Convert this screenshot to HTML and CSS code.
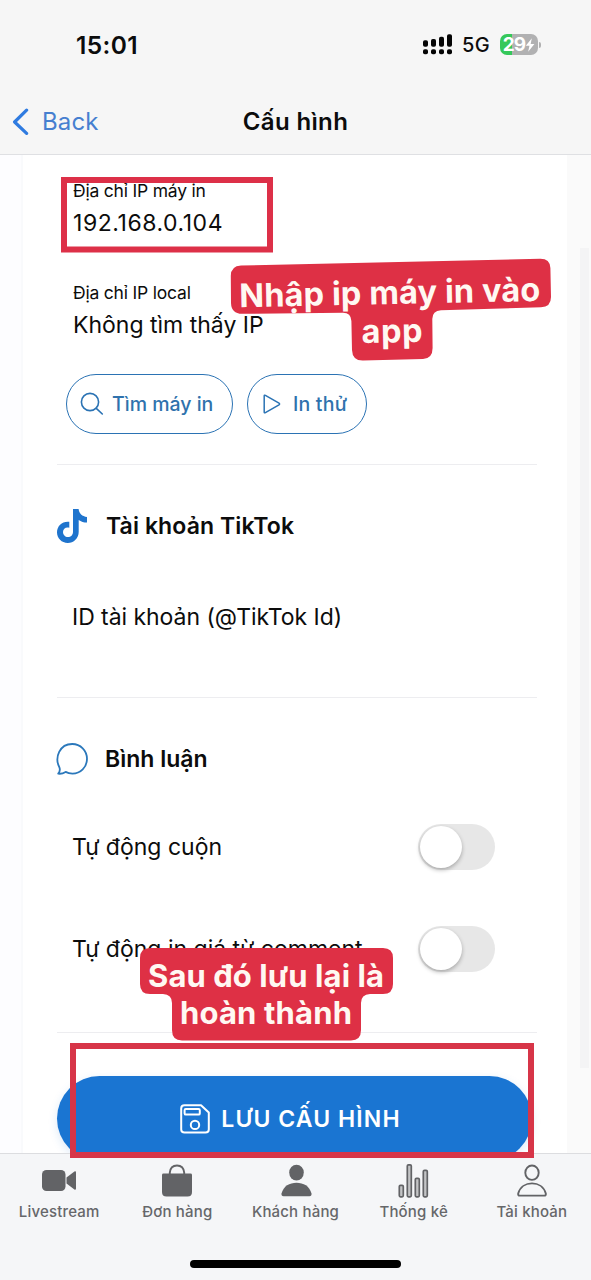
FILE: index.html
```html
<!DOCTYPE html>
<html lang="vi">
<head>
<meta charset="utf-8">
<title>Cấu hình</title>
<link rel="stylesheet" href="styles.css">
</head>
<body>
<div class="app">
  <header class="header">
    <div class="status">
      <span class="time">15:01</span>
      <div class="status-right">
        <svg class="signal" width="30" height="21" viewBox="0 0 30 21"><g fill="#050505"><rect x="0" y="6.3" width="5" height="6.5" rx="1.8"/><rect x="8" y="4.9" width="5" height="7.9" rx="1.8"/><rect x="16" y="2.8" width="5" height="10" rx="1.8"/><rect x="24" y="0.3" width="5" height="12.5" rx="1.8"/><rect x="0" y="15.3" width="5" height="5" rx="1.8"/><rect x="8" y="15.3" width="5" height="5" rx="1.8"/><rect x="16" y="15.3" width="5" height="5" rx="1.8"/><rect x="24" y="15.3" width="5" height="5" rx="1.8"/></g></svg>
        <span class="net">5G</span>
        <div class="battery"><span class="pct">29</span><svg width="10" height="14" viewBox="0 0 9 13"><path d="M6.2 0.3 L0.6 7.2 H4 L2.8 12.7 L8.6 5.5 H5.1 Z" fill="#fff"/></svg></div>
        <span class="battery-tip"></span>
      </div>
    </div>
    <nav class="nav">
      <div class="back">
        <svg width="17" height="28" viewBox="0 0 17 28"><path d="M14.6 2.2 L2.6 14 L14.6 25.4" fill="none" stroke="#2f7be0" stroke-width="3.2" stroke-linecap="round" stroke-linejoin="round"/></svg>
        <span class="back-text">Back</span>
      </div>
      <h1 class="title">Cấu hình</h1>
      <div></div>
    </nav>
  </header>

  <main class="content">
    <div class="card">
      <div class="field"><span class="label">Địa chỉ IP máy in</span><span class="value ip">192.168.0.104</span></div>
      <div class="field"><span class="label">Địa chỉ IP local</span><span class="value">Không tìm thấy IP</span></div>
      <div class="actions">
        <button class="pill find">
          <svg width="24" height="24" viewBox="0 0 24 24"><g fill="none" stroke="#2b73b4" stroke-width="1.6" stroke-linecap="round"><circle cx="10" cy="10" r="8.6"/><path d="M16.3 16.3 L22.3 22"/></g></svg>
          <span>Tìm máy in</span>
        </button>
        <button class="pill test">
          <svg width="18" height="20" viewBox="0 0 18 20"><path d="M1.2 2 V18 Q1.2 19.3 2.4 18.6 L16 10.8 Q17.2 10 16 9.2 L2.4 1.4 Q1.2 0.7 1.2 2 Z" fill="none" stroke="#2b73b4" stroke-width="1.5"/></svg>
          <span>In thử</span>
        </button>
      </div>

      <section class="section">
        <h2 class="section-title">
          <svg width="31" height="34" viewBox="0 0 31 34"><path d="M16 0 H21.6 C22 4.4 25.2 7.5 30 7.9 V13.5 C26.8 13.5 24 12.5 21.7 10.9 V22.8 C21.7 29.5 16.7 34 10.8 34 C4.6 34 0 29.3 0 23.3 C0 16.8 5.6 11.9 12.3 12.8 V18.8 C8.8 17.8 6 20 6 23.1 C6 26 8.2 28.1 10.9 28.1 C13.9 28.1 16 25.9 16 22.7 Z" fill="#1f74cd"/></svg>
          <span class="tiktok-title">Tài khoản TikTok</span>
        </h2>
        <div class="row first-row"><span class="tiktok-id">ID tài khoản (@TikTok Id)</span></div>
      </section>

      <section class="section comments">
        <h2 class="section-title">
          <svg class="bubble" width="32" height="32" viewBox="0 0 32 32"><path d="M2.2 30.6 C4.2 28.4 4.3 26.6 3.3 24.1 C-1.6 14.5 3.6 1 16.2 1 C24.5 1 31 7.5 31 15.8 C31 24.4 24.4 30.6 16.5 30.6 C13.6 30.6 11.5 30 9.6 28.9 C7.5 30.2 4.6 31 2.2 30.6 Z" fill="none" stroke="#2b78bb" stroke-width="1.8" stroke-linejoin="round"/></svg>
          <span>Bình luận</span>
        </h2>
        <div class="row"><span>Tự động cuộn</span><span class="toggle"><i class="knob"></i></span></div>
        <div class="row"><span>Tự động in giá từ comment</span><span class="toggle"><i class="knob"></i></span></div>
      </section>

      <div class="section save-area">
        <button class="save">
          <svg width="30" height="30" viewBox="0 0 30 30"><g fill="none" stroke="#fff" stroke-width="2" stroke-linejoin="round"><path d="M4.5 1.2 H21 L28.8 8.5 V25.5 Q28.8 28.6 25.5 28.6 H4.5 Q1.2 28.6 1.2 25.5 V4.5 Q1.2 1.2 4.5 1.2 Z"/><rect x="4.6" y="5" width="15.2" height="5.6" rx="1.2"/><circle cx="15" cy="20.9" r="4.2"/></g></svg>
          <span>LƯU CẤU HÌNH</span>
        </button>
      </div>
    </div>
    <div class="scrollbar"></div>
  </main>

  <footer class="footer">
    <div class="tabs">
      <div class="tab"><svg width="36" height="34" viewBox="0 0 36 34"><g fill="#626366"><rect x="1" y="6" width="23.5" height="21" rx="4.5"/><path d="M25.5 13.5 L33.4 7.6 Q35 6.8 35 8.4 V24.6 Q35 26.2 33.4 25.4 L25.5 19.5 Z"/></g></svg><span>Livestream</span></div>
      <div class="tab"><svg width="36" height="34" viewBox="0 0 36 34"><path d="M4.5 9.6 H31.5 Q33 9.6 33 11 V28 Q33 32.6 28.5 32.6 H7.5 Q3 32.6 3 28 V11 Q3 9.6 4.5 9.6 Z" fill="#626366"/><path d="M10.8 11 V8.7 Q11.5 1.5 18 1.5 Q24.5 1.5 25.2 8.7 V11" fill="none" stroke="#626366" stroke-width="1.9"/></svg><span>Đơn hàng</span></div>
      <div class="tab"><svg width="36" height="34" viewBox="0 0 36 34"><g fill="#626366"><ellipse cx="18.5" cy="8.6" rx="7.3" ry="7.9"/><path d="M3.5 29.5 C5.5 22 11.5 18.7 18.5 18.7 C25.5 18.7 31.5 22 33.5 29.5 Q33.8 32.2 31.5 32.2 H5.5 Q3.2 32.2 3.5 29.5 Z"/></g></svg><span>Khách hàng</span></div>
      <div class="tab"><svg width="36" height="34" viewBox="0 0 36 34"><g fill="#c3c4c6" stroke="#626366" stroke-width="1.7"><rect x="3.3" y="21.3" width="4" height="11.5" rx="1.2"/><rect x="11.3" y="0.9" width="4" height="31.9" rx="1.2"/><rect x="19.3" y="14.3" width="4" height="18.5" rx="1.2"/><rect x="27.3" y="6.3" width="4" height="26.5" rx="1.2"/></g></svg><span>Thống kê</span></div>
      <div class="tab"><svg width="36" height="34" viewBox="0 0 36 34"><g fill="none" stroke="#626366" stroke-width="1.9"><ellipse cx="18" cy="8.7" rx="6.7" ry="7.2"/><path d="M4.2 29.5 C6.1 22.8 11.8 19.4 18 19.4 C24.2 19.4 29.9 22.8 31.8 29.5 Q32.2 31.6 30.2 31.6 H5.8 Q3.8 31.6 4.2 29.5 Z"/></g></svg><span>Tài khoản</span></div>
    </div>
    <div class="home"></div>
  </footer>

  <svg class="notes" width="591" height="1280" viewBox="0 0 591 1280">
    <rect x="64" y="180" width="206" height="69.5" fill="none" stroke="#dd3048" stroke-width="6"/>
    <rect x="73" y="1046" width="458" height="109" fill="none" stroke="#d73548" stroke-width="6"/>
    <path d="M241 265.5 L540 258.8 Q550 258.6 550.4 268 L551 297 Q551 307 541 307.3 L441 310.3 Q432.3 311 432.3 319 L432.6 348 Q432.6 358.5 423 359 L363 360.6 Q352.4 360.8 352 350 L351.4 321 Q351 312.8 343 312.8 L242 313.8 Q231.4 313.8 231 303 L230.8 276 Q230.8 266 241 265.5 Z" fill="#de3045"/>
    <path d="M150 948 H383 Q393 948 393 958 V984 Q393 994 383 994 H370 Q361 994.5 361 1003 V1030 Q361 1040.5 351 1040.5 H182 Q172 1040.5 172 1030 V1003 Q172 994.5 163 994 H150 Q140 994 140 984 V958 Q140 948 150 948 Z" fill="#de3045"/>
    <g class="note-text" transform="rotate(-1.2 391 304)">
      <text x="239.5" y="304" textLength="301">Nhập ip máy in vào</text>
      <text x="361" y="342.5" textLength="61">app</text>
    </g>
    <g class="note-text small">
      <text x="148" y="987" textLength="236">Sau đó lưu lại là</text>
      <text x="180" y="1024" textLength="172">hoàn thành</text>
    </g>
  </svg>
</div>
</body>
</html>
```
FILE: styles.css
```css
* { box-sizing: border-box; }
body { margin: 0; background: #fff; font-family: Inter, "Liberation Sans", sans-serif; color: #0c0c0c; }
h1, h2 { margin: 0; font-size: inherit; font-weight: 600; }
button { font-family: inherit; margin: 0; }
svg { display: block; flex: none; }
span { white-space: nowrap; }
.app { position: relative; width: 591px; height: 1280px; display: flex; flex-direction: column; overflow: hidden; }

.header { height: 155px; background: #f6f6f6; border-bottom: 1px solid #dfe0e3; display: flex; flex-direction: column; flex: none; }
.status { height: 89px; display: flex; align-items: center; justify-content: space-between; padding: 0 50px 0 76px; }
.time { font-size: 24.5px; font-weight: 600; letter-spacing: 0.4px; }
.status-right { display: flex; align-items: center; }
.net { font-size: 20px; font-weight: 500; letter-spacing: 0.4px; margin-left: 9px; width: 29px; }
.battery { width: 38px; height: 21px; margin-left: 9px; border-radius: 7px; background: linear-gradient(90deg, #35c85a 0 12px, #b1b1b2 12px); display: flex; align-items: center; justify-content: center; }
.pct { color: #fff; font-size: 19px; font-weight: 700; letter-spacing: -0.8px; }
.battery-tip { width: 2px; height: 6px; margin-left: 1px; border-radius: 0 2px 2px 0; background: #b1b1b2; }
.nav { height: 65px; display: grid; grid-template-columns: 1fr auto 1fr; align-items: center; padding: 0 12px; }
.back { display: flex; align-items: center; gap: 13px; color: #467fd0; }
.back-text { font-size: 24px; letter-spacing: 0.1px; }
.title { font-size: 24px; letter-spacing: 0.35px; }

.content { flex: none; height: 998px; overflow: hidden; display: flex; background: #fafafa; border-left: 21px solid #fdfdff; }
.card { width: 546px; height: 1100px; padding: 23px 30px 0 34px; border-left: 2px solid #f9fafc; background: #fff; flex: none; }
.scrollbar { width: 9px; height: 820px; margin: 93px 0 0 13px; background: #f4f4f5; }
.field { display: flex; flex-direction: column; height: 102px; padding-left: 16px; }
.label { font-size: 17.5px; line-height: 26px; letter-spacing: -0.2px; }
.value { font-size: 23px; line-height: 38px; }
.ip { letter-spacing: 0.55px; }
.actions { display: flex; gap: 14px; margin: -8px 0 30px 9px; }
.pill { height: 60px; border: 1.5px solid #2b73b4; border-radius: 30px; background: #fff; color: #2f72ad; font-size: 19.5px; font-weight: 500; display: flex; align-items: center; padding: 0 0 0 13px; }
.find { width: 167px; gap: 8px; }
.test { width: 120px; gap: 12px; padding-left: 15px; letter-spacing: 0.2px; }
.section { border-top: 1px solid #ededf0; height: 233px; padding-top: 37px; }
.section-title { display: flex; align-items: center; gap: 18px; height: 48px; font-size: 23px; }
.tiktok-title { letter-spacing: 0.1px; }
.bubble { margin: 0 -1px; }
.comments .section-title { margin-bottom: 13px; }
.comments { height: 335px; }
.row { display: flex; align-items: center; justify-content: space-between; height: 102px; padding: 0 42px 0 15px; font-size: 23px; }
.first-row { margin-top: 16px; padding-right: 0; }
.tiktok-id { letter-spacing: -0.05px; }
.toggle { width: 77px; height: 46px; border-radius: 23px; background: #e7e7e7; padding: 2px; }
.knob { display: block; width: 42px; height: 42px; border-radius: 50%; background: #fff; box-shadow: 0 2px 4px rgba(0,0,0,.28); }
.save-area { padding-top: 43px; }
.save { width: 475px; height: 85px; border: 0; padding: 0 8px 0 0; border-radius: 43px; background: #1a75d2; color: #fff; font-size: 23px; font-weight: 600; letter-spacing: 1.1px; display: flex; align-items: center; justify-content: center; gap: 11px; box-shadow: 0 3px 10px rgba(30,110,200,.15); }

.footer { height: 127px; flex: none; background: #f5f6f8; border-top: 1px solid #dcdde0; display: flex; flex-direction: column; align-items: center; }
.tabs { display: grid; grid-template-columns: repeat(5, 118.2px); height: 106px; }
.tab { display: flex; flex-direction: column; align-items: center; padding-top: 10px; color: #66676a; font-size: 15px; font-weight: 500; letter-spacing: 0.18px; line-height: 28px; }
.home { width: 211px; height: 8px; border-radius: 4px; background: #000; }

.notes { position: absolute; left: 0; top: 0; }
.note-text { fill: #fff8f2; font-size: 32.5px; font-weight: 700; }
.small { font-size: 31px; }
```
